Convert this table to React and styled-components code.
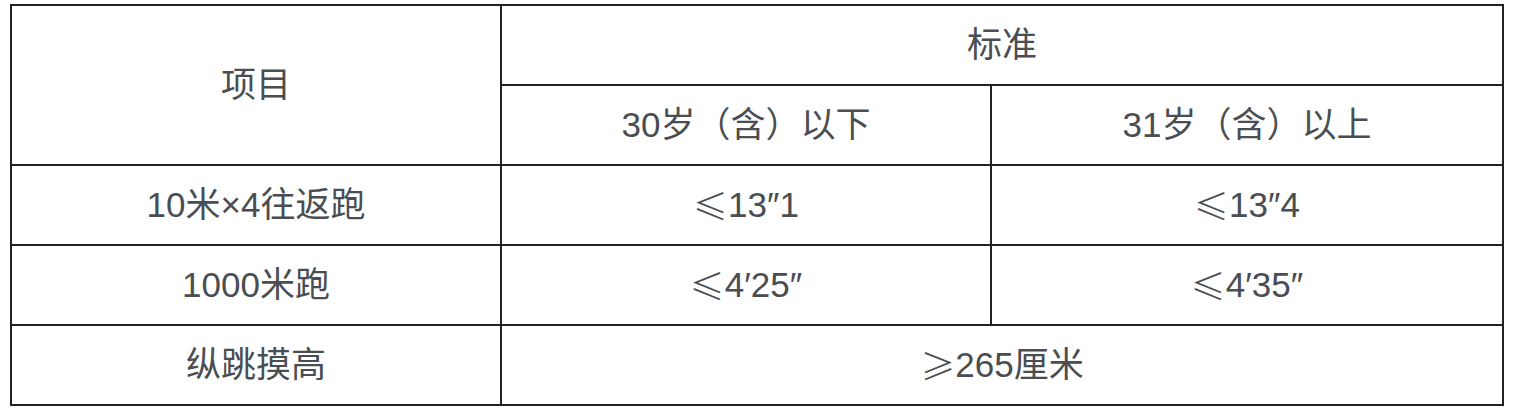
import React from "react";
import styled, { createGlobalStyle } from "styled-components";

const Global = createGlobalStyle`
  html, body { margin: 0; padding: 0; background: #ffffff; }
  body { font-family: "Liberation Sans", "Noto Sans CJK SC", "Noto Sans", sans-serif; }
`;

const Page = styled.div`
  padding: 4px 12px 0 10px;
`;

const Table = styled.div`
  display: grid;
  grid-template-columns: 488px 488px 510px;
  grid-template-rows: repeat(5, 78px);
  gap: 2px;
  padding: 2px;
  width: max-content;
  background: #222222;
`;

const Cell = styled.div`
  background: #ffffff;
  display: flex;
  align-items: center;
  justify-content: center;
  padding-bottom: 2px;
  color: #4a4d52;
  font-size: 35px;
  line-height: 1;
  white-space: pre;
  grid-column: ${(p) => p.$col || "auto"};
  grid-row: ${(p) => p.$row || "auto"};
`;

const Sym = styled.span`
  font-family: "Noto Sans CJK SC", sans-serif;
  font-weight: 300;
`;

const rows = [
  ["10米×4往返跑", ["≤", "13″1"], ["≤", "13″4"]],
  ["1000米跑", ["≤", "4′25″"], ["≤", "4′35″"]],
];

const Value = ({ v }) =>
  Array.isArray(v) ? (
    <>
      <Sym>{v[0]}</Sym>
      {v[1]}
    </>
  ) : (
    v
  );

export default function App() {
  return (
    <Page>
      <Global />
      <Table>
        <Cell $col="1" $row="1 / span 2">项目</Cell>
        <Cell $col="2 / span 2" $row="1">标准</Cell>
        <Cell $col="2" $row="2">30岁（含）以下</Cell>
        <Cell $col="3" $row="2">31岁（含）以上</Cell>
        {rows.map((r) => (
          <React.Fragment key={r[0]}>
            {r.map((c, i) => (
              <Cell key={i}>
                <Value v={c} />
              </Cell>
            ))}
          </React.Fragment>
        ))}
        <Cell>纵跳摸高</Cell>
        <Cell $col="2 / span 2">
          <Sym>≥</Sym>265厘米
        </Cell>
      </Table>
    </Page>
  );
}
